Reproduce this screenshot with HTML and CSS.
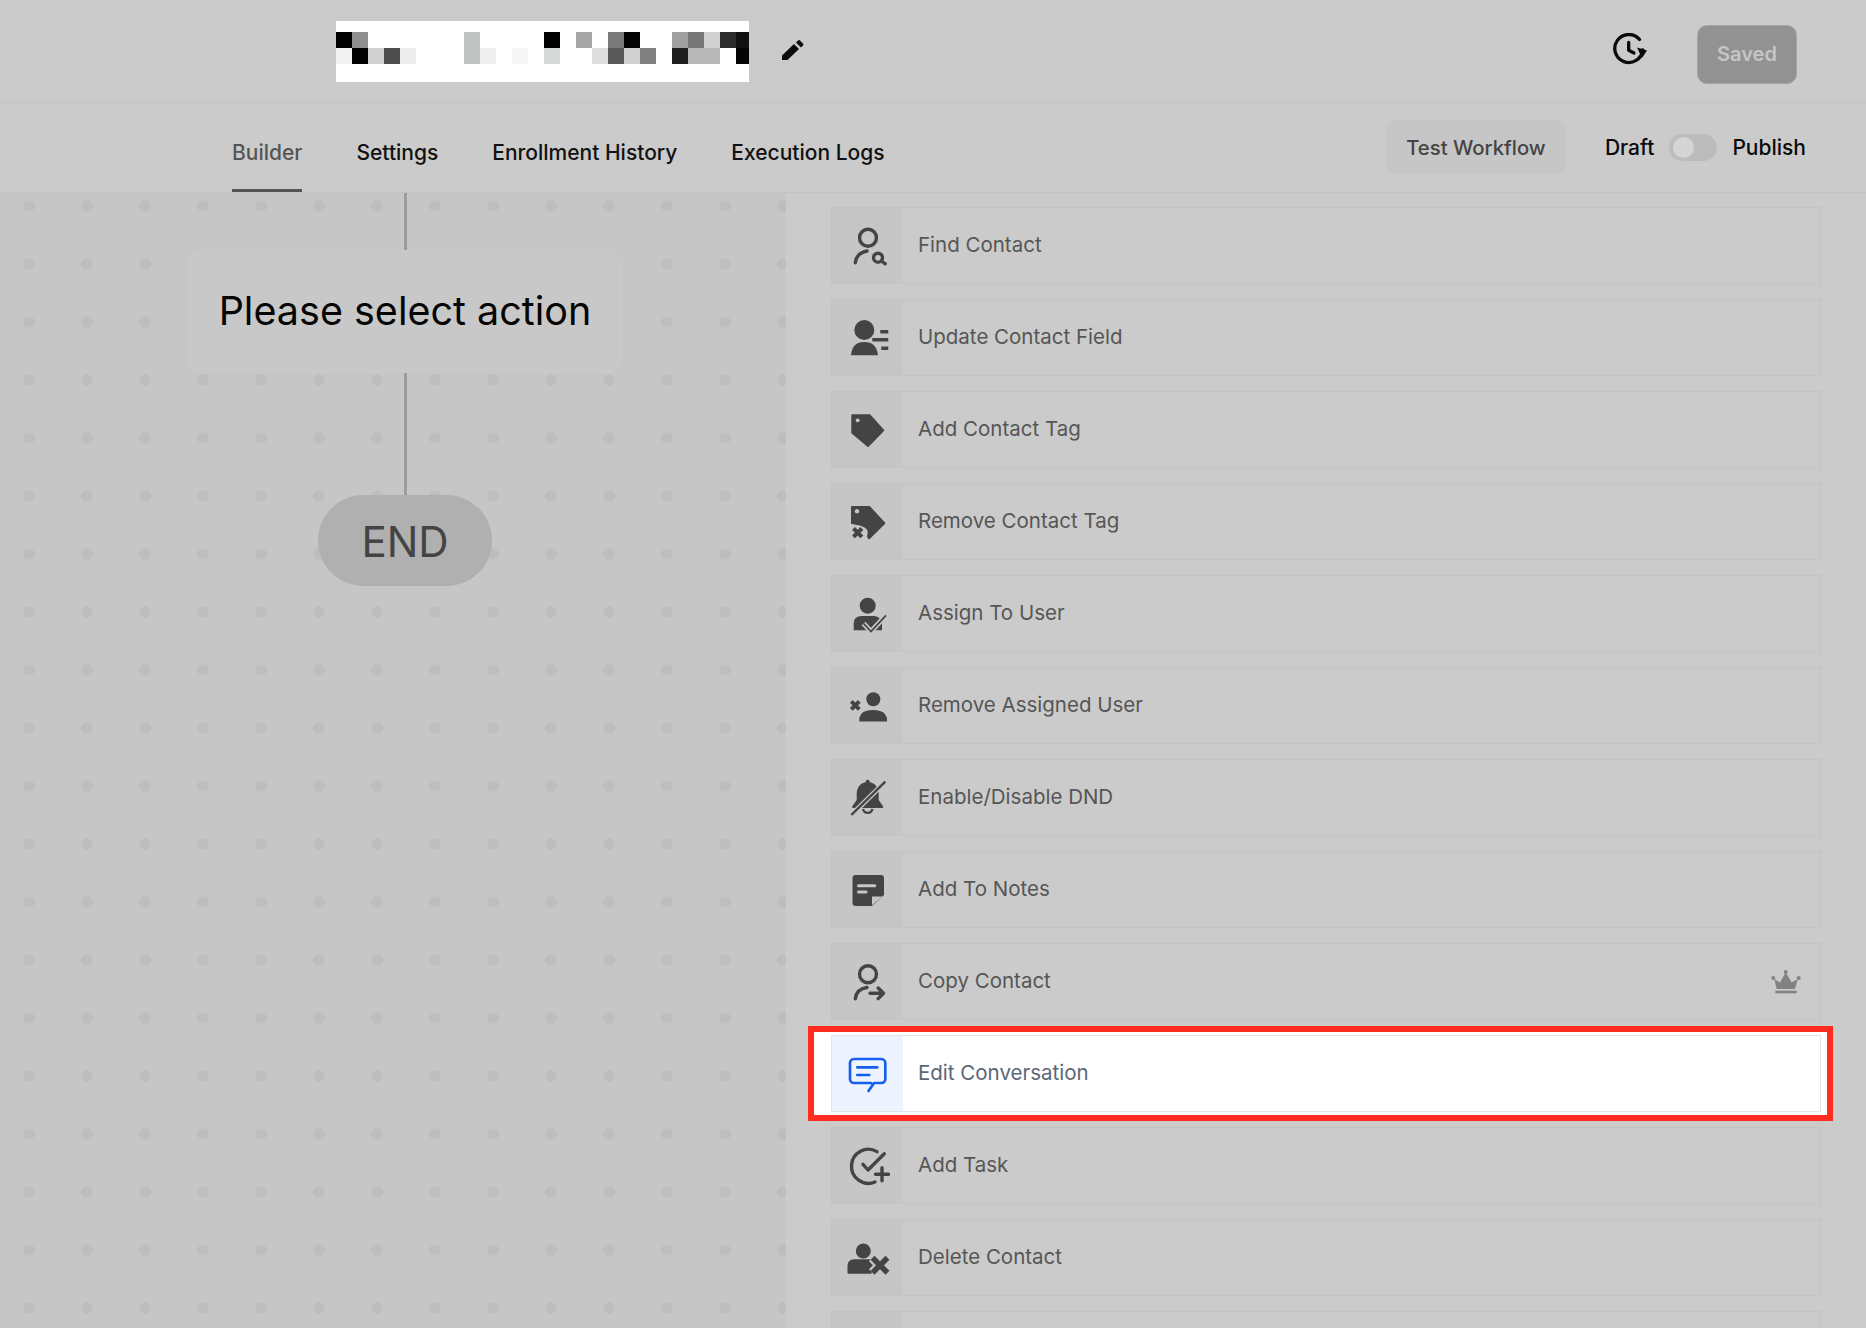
FILE: index.html
```html
<!DOCTYPE html>
<html lang="en">
<head>
<meta charset="utf-8">
<title>Workflow Builder</title>
<link rel="stylesheet" href="styles.css">
</head>
<body>
<header class="topbar">
  <svg class="mosaic" viewBox="0 0 413 61" width="413" height="61" aria-label="Redacted workflow name">
    <rect width="413" height="61" fill="#fff"/>
    <g>
      <rect x="0" y="11" width="16" height="16" fill="#000"/>
      <rect x="16" y="11" width="16" height="16" fill="#8f8f8f"/>
      <rect x="128" y="11" width="16" height="32" fill="#c0c2c2"/>
      <rect x="208" y="11" width="16" height="16" fill="#000"/>
      <rect x="240" y="11" width="16" height="16" fill="#a5a5a5"/>
      <rect x="272" y="11" width="16" height="16" fill="#7b7b7b"/>
      <rect x="288" y="11" width="16" height="16" fill="#050505"/>
      <rect x="336" y="11" width="16" height="16" fill="#a0a0a0"/>
      <rect x="352" y="11" width="16" height="16" fill="#777"/>
      <rect x="368" y="11" width="16" height="16" fill="#d0d0d0"/>
      <rect x="384" y="11" width="16" height="16" fill="#2b2b2b"/>
      <rect x="400" y="11" width="13" height="16" fill="#111"/>
      <rect x="0" y="27" width="16" height="16" fill="#f2f2f2"/>
      <rect x="16" y="27" width="16" height="16" fill="#000"/>
      <rect x="32" y="27" width="16" height="16" fill="#d0d0d0"/>
      <rect x="48" y="27" width="16" height="16" fill="#4d4d4d"/>
      <rect x="64" y="27" width="16" height="16" fill="#ececec"/>
      <rect x="144" y="27" width="16" height="16" fill="#efefef"/>
      <rect x="176" y="27" width="16" height="16" fill="#f6f6f6"/>
      <rect x="208" y="27" width="16" height="16" fill="#d8dada"/>
      <rect x="256" y="27" width="16" height="16" fill="#dedede"/>
      <rect x="272" y="27" width="16" height="16" fill="#595959"/>
      <rect x="288" y="27" width="16" height="16" fill="#d0d0d0"/>
      <rect x="304" y="27" width="16" height="16" fill="#808080"/>
      <rect x="336" y="27" width="16" height="16" fill="#1e1e1e"/>
      <rect x="352" y="27" width="32" height="16" fill="#b8b8b8"/>
      <rect x="400" y="27" width="13" height="16" fill="#050505"/>
    </g>
  </svg>
  <svg class="pencil" viewBox="0 0 24 22" width="24" height="22" aria-label="Edit name"><path d="M1 21v-4.500L13 5l5 5L6.500 21zM15 3.500l2-2q1-1 2 0l3 3q1 1 0 2l-2 2z"/></svg>
  <div class="topbar-right">
    <svg class="history" viewBox="0 0 34 32" width="34" height="32" aria-label="History">
      <path class="history-line" d="M26.500 6.500A14 14 0 1 0 29.700 17"/>
      <path class="history-line" d="M15.700 9.300v8L21 20"/>
      <path class="history-head" d="M24 14.500l10 3L29 25z"/>
    </svg>
    <button class="saved-btn">Saved</button>
  </div>
</header>

<nav class="tabs">
  <a class="tab tab-active">Builder</a>
  <a class="tab">Settings</a>
  <a class="tab">Enrollment History</a>
  <a class="tab">Execution Logs</a>
  <div class="tabs-right">
    <button class="test-btn">Test Workflow</button>
    <span class="status-label">Draft</span>
    <span class="toggle"><span class="toggle-knob"></span></span>
    <span class="status-label">Publish</span>
  </div>
</nav>

<main class="workspace">
  <section class="canvas">
    <div class="flow">
      <div class="connector connector-top"></div>
      <div class="node-action">Please select action</div>
      <div class="connector connector-mid"></div>
      <div class="node-end">END</div>
    </div>
  </section>

  <aside class="panel">
    <div class="card">
      <div class="card-icon"><svg class="icon" viewBox="-2 -2 44 44"><circle class="ln" cx="20" cy="11.700" r="8.500"/><path class="ln" d="M7.300 36.700Q8.500 27 19 25"/><circle class="ln" cx="30" cy="31.700" r="4.500"/><path class="ln" d="M33.500 35l3.800 2.800"/></svg></div>
      <span class="card-label">Find Contact</span>
    </div>
    <div class="card">
      <div class="card-icon"><svg class="icon" viewBox="-2 -2 44 44"><circle class="fl" cx="16.300" cy="12" r="10"/><path class="fl" d="M3 37.300Q4 24 16.300 24T30 37.300z"/><path class="bar" d="M32.300 13.700h8M24.300 21.700h16M33.300 30.300h7"/></svg></div>
      <span class="card-label">Update Contact Field</span>
    </div>
    <div class="card">
      <div class="card-icon"><svg class="icon" viewBox="-2 -2 44 44"><path class="fl rj" d="M4.300 5.300h17.500l13.500 15L20 36 4.300 22.700z"/><circle class="hole" cx="9.700" cy="10.300" r="1.900"/></svg></div>
      <span class="card-label">Add Contact Tag</span>
    </div>
    <div class="card">
      <div class="card-icon"><svg class="icon" viewBox="-2 -2 44 44"><path class="fl rj" d="M4 5h17.300l15 16.300-15.300 15-1-2.300q3-8.300-7-11.300L4 21z"/><circle class="hole" cx="9" cy="9.300" r="2.200"/><path class="ln-x" d="M5.500 26.500l8.400 8.400M13.900 26.500l-8.400 8.400"/></svg></div>
      <span class="card-label">Remove Contact Tag</span>
    </div>
    <div class="card">
      <div class="card-icon"><svg class="icon" viewBox="-2 -2 44 44"><circle class="fl" cx="19.700" cy="11.700" r="8"/><path class="fl" d="M5.700 36.300v-7q0-7 8-7.300h12q7 .3 8.300 7.300v7z"/><path class="halo" d="M15.500 29.500l7.500 8L38 21.300"/><path class="check" d="M15.500 29.500l7.500 8L38 21.300"/></svg></div>
      <span class="card-label">Assign To User</span>
    </div>
    <div class="card">
      <div class="card-icon"><svg class="icon" viewBox="-2 -2 44 44"><circle class="fl" cx="25.300" cy="13.300" r="7"/><path class="fl" d="M11.300 34q0-10 13.700-10t14 10v1.500H11.300z"/><path class="ln-x" d="M3.300 15.300l8 8M11.300 15.300l-8 8"/></svg></div>
      <span class="card-label">Remove Assigned User</span>
    </div>
    <div class="card">
      <div class="card-icon"><svg class="icon" viewBox="-2 -2 44 44"><circle class="fl" cx="19.700" cy="3.800" r="2"/><path class="fl" d="M19.700 4c-7 0-11 5-11 12v6l-4.500 6.500q-.5 1 .8 1.500h29.400q1.300-.5.800-1.500L30.700 22v-6c0-7-4-12-11-12z"/><path class="arc" d="M15 31a4.800 4.800 0 0 0 9.400 0"/><path class="halo" d="M3.300 37L37.300 3.700"/><path class="slash" d="M3.300 37L37.300 3.700"/></svg></div>
      <span class="card-label">Enable/Disable DND</span>
    </div>
    <div class="card">
      <div class="card-icon"><svg class="icon" viewBox="-2 -2 44 44"><path class="fl" d="M7.500 5h25.500q3 0 3 3v17L24 36H7.500q-3 0-3-3V8q0-3 3-3z"/><path class="note-line" d="M10.500 15.700h16.300M10.500 22h7.500"/><path class="hole" d="M24 26.500h10.500L24 35.300z"/></svg></div>
      <span class="card-label">Add To Notes</span>
    </div>
    <div class="card">
      <div class="card-icon"><svg class="icon" viewBox="-2 -2 44 44"><circle class="ln" cx="20" cy="12.300" r="8.500"/><path class="ln" d="M7.300 36.700Q8.500 27 19 25.500"/><path class="ln" d="M22 31.300h13M30.200 26l5.300 5.300-5.300 5.300"/></svg></div>
      <span class="card-label">Copy Contact</span>
      <svg class="crown" viewBox="0 0 30 24" width="30" height="24" aria-label="Premium"><circle cx="2.300" cy="8" r="2"/><circle cx="14.700" cy="2" r="2"/><circle cx="27.700" cy="8" r="2"/><path d="M3.300 9l5.700 3.500L14.700 2.500l6 10 6-3.500L24 19H5.700z"/><path d="M4.300 20.700h21.400v2.600H4.300z"/></svg>
    </div>
    <div class="card-slot">
      <div class="card card-hl">
        <div class="card-icon"><svg class="icon icon-blue" viewBox="-2 -2 44 44"><path class="ln-blue" d="M24 29H7a4 4 0 0 1-4-4V9a4 4 0 0 1 4-4h27.300a4 4 0 0 1 4 4v16a4 4 0 0 1-4 4H27L21.500 37"/><path class="ln-blue" d="M10.300 13.300h20M10.300 21h12"/></svg></div>
        <span class="card-label">Edit Conversation</span>
      </div>
    </div>
    <div class="card">
      <div class="card-icon"><svg class="icon" viewBox="-2 -2 44 44"><path class="ln" d="M29 5.600A17 17 0 1 0 27 36"/><path class="ln" d="M15 18.300l5 5.700L36.300 7.700"/><path class="ln" d="M27.500 28.300h13M34 21.800v13"/></svg></div>
      <span class="card-label">Add Task</span>
    </div>
    <div class="card">
      <div class="card-icon"><svg class="icon" viewBox="-2 -2 44 44"><circle class="fl" cx="15.300" cy="13" r="7.500"/><path class="fl" d="M-.5 35v-7q0-6.700 7-6.700h14q4 0 5 3l-2 11.400H.5q-1 0-1-.7z"/><path class="halo-big" d="M24.500 19.800l15 15M39.500 19.800l-15 15"/><path class="x-big" d="M24.500 19.800l15 15M39.500 19.800l-15 15"/></svg></div>
      <span class="card-label">Delete Contact</span>
    </div>
    <div class="card">
      <div class="card-icon"></div>
      <span class="card-label"></span>
    </div>
  </aside>
</main>
</body>
</html>
```
FILE: styles.css
```css
* { box-sizing: border-box; }
html, body { margin: 0; padding: 0; }
body {
  width: 1866px;
  height: 1328px;
  overflow: hidden;
  background: #cbcbcb;
  font-family: "Inter", "Liberation Sans", sans-serif;
  color: #0a0a0a;
}

/* top bar */
.topbar {
  height: 103px;
  display: flex;
  align-items: flex-start;
  padding-left: 336px;
  border-bottom: 1px solid #c3c3c3;
}
.mosaic { margin-top: 21px; display: block; }
.pencil { margin: 39px 0 0 32px; fill: #0c0c0c; }
.topbar-right {
  margin-left: auto;
  display: flex;
  align-items: flex-start;
  padding-right: 69px;
}
.history { margin-top: 33px; margin-right: 50px; }
.history-line { fill: none; stroke: #0a0a0a; stroke-width: 3.300; stroke-linecap: round; stroke-linejoin: round; }
.history-head { fill: #0a0a0a; }
.saved-btn {
  margin-top: 25px;
  width: 100px;
  height: 59px;
  padding: 0 0 2px;
  border: 1px solid #a5a5a5;
  border-radius: 10px;
  background: #929292;
  color: #c6c6c6;
  font: 600 20px "Inter", "Liberation Sans", sans-serif;
}

/* tabs */
.tabs {
  height: 90px;
  display: flex;
  align-items: stretch;
  gap: 54px;
  padding-left: 232px;
  border-bottom: 1px solid #c3c3c3;
}
.tab {
  padding-top: 37px;
  font-size: 21px;
  font-weight: 500;
  line-height: 25px;
  color: #111;
  border-bottom: 3px solid transparent;
}
.tab-active { color: #555; border-bottom-color: #555; }
.tabs-right {
  margin-left: auto;
  display: flex;
  align-items: center;
  padding-right: 60px;
}
.test-btn {
  width: 182px;
  height: 55px;
  margin-right: 38px;
  border: 0;
  border-radius: 12px;
  background: #c6c6c6;
  color: #444;
  font: 500 20.300px "Inter", "Liberation Sans", sans-serif;
}
.status-label { font-size: 21px; font-weight: 500; color: #0a0a0a; }
.toggle {
  width: 48px;
  height: 27px;
  margin: 0 15px;
  padding: 3px 4px;
  border-radius: 14px;
  background: #bcbcbc;
  display: block;
}
.toggle-knob {
  display: block;
  width: 21px;
  height: 21px;
  border-radius: 50%;
  background: #d4d4d4;
}

/* workspace */
.workspace { display: flex; height: 1135px; }
.canvas {
  width: 786px;
  flex: none;
  padding-left: 188px;
  background-color: #c6c6c6;
  background-image: radial-gradient(circle at 29px 29px, #bebebe 5.500px, transparent 6px);
  background-size: 58px 58px;
  background-position: 0 -16px;
}
.flow { width: 434px; display: flex; flex-direction: column; align-items: center; }
.connector { width: 3px; background: #9c9c9c; }
.connector-top { height: 57px; }
.connector-mid { height: 122px; }
.node-action {
  width: 434px;
  height: 123px;
  display: flex;
  align-items: center;
  justify-content: center;
  padding-bottom: 2px;
  background: #c8c8c8;
  border: 1px dotted #cdcdcd;
  border-radius: 14px;
  font-size: 39.500px;
  color: #050505;
}
.node-end {
  width: 174px;
  height: 91px;
  display: flex;
  align-items: center;
  justify-content: center;
  padding-top: 1px;
  border-radius: 46px;
  background: #b0b0b0;
  color: #444;
  font-size: 42px;
}

/* action panel */
.panel {
  flex: 1;
  overflow: hidden;
  padding: 14px 45px 0 45px;
  background: #cbcbcb;
  display: flex;
  flex-direction: column;
  gap: 15px;
}
.card {
  flex: none;
  height: 77px;
  display: flex;
  align-items: center;
  border: 1px solid #c3c3c3;
  background: #cbcbcb;
}
.card-icon {
  width: 71px;
  height: 100%;
  flex: none;
  display: flex;
  align-items: center;
  justify-content: center;
  background: #c6c6c6;
}
.card-label { margin-left: 15px; padding-bottom: 2px; font-size: 20.500px; color: #565656; }
.crown { margin-left: auto; margin-right: 19px; fill: #828282; }

.icon { width: 44px; height: 44px; display: block; }
.ln { fill: none; stroke: #444; stroke-width: 3.400; stroke-linecap: round; stroke-linejoin: round; }
.ln-x { fill: none; stroke: #444; stroke-width: 4; }
.fl { fill: #444; }
.rj { stroke: #444; stroke-width: 2; stroke-linejoin: round; }
.bar { fill: none; stroke: #444; stroke-width: 3.500; }
.hole { fill: #c6c6c6; }
.halo { fill: none; stroke: #c6c6c6; stroke-width: 5; }
.check { fill: none; stroke: #444; stroke-width: 1.800; }
.slash { fill: none; stroke: #444; stroke-width: 2.400; }
.arc { fill: none; stroke: #444; stroke-width: 2.400; }
.note-line { fill: none; stroke: #c6c6c6; stroke-width: 3; stroke-linecap: round; }
.halo-big { fill: none; stroke: #c6c6c6; stroke-width: 10; }
.x-big { fill: none; stroke: #444; stroke-width: 5.500; }
.icon-blue { margin-left: -2px; }
.ln-blue { fill: none; stroke: #155eef; stroke-width: 2.700; stroke-linecap: round; stroke-linejoin: round; }

/* highlighted card with its annotation frame */
.card-slot { position: relative; flex: none; }
.card-slot::before {
  content: "";
  position: absolute;
  inset: -9px -12px -9px -23px;
  border: 6px solid #ff2d20;
  background: #fff;
}
.card-hl {
  position: relative;
  background: #fff;
  border-color: #e4e4e4;
}
.card-hl .card-icon { background: #eef4ff; }
.card-hl .card-label { color: #5b6678; }
```
